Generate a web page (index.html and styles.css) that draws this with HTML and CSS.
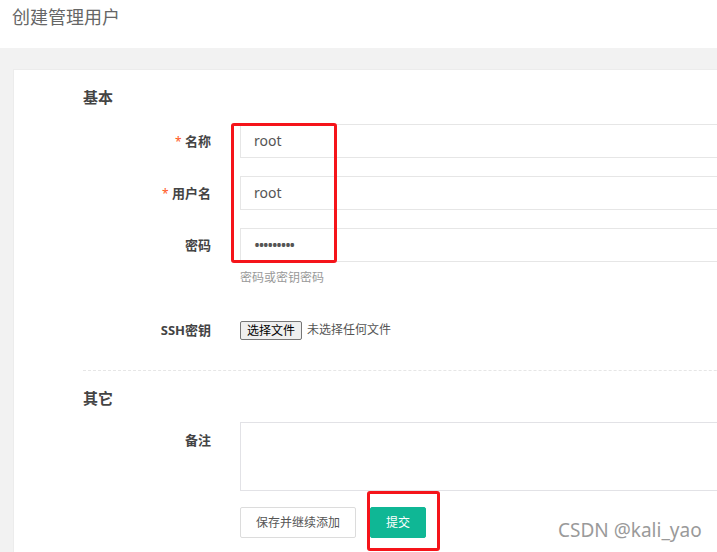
FILE: index.html
```html
<!DOCTYPE html>
<html lang="zh-CN">
<head>
<meta charset="utf-8">
<title>创建管理用户</title>
<link rel="stylesheet" href="styles.css">
</head>
<body>
<div class="page">
  <header class="head">创建管理用户</header>
  <main class="main">
    <section class="card">
      <h2 class="sec-title">基本</h2>
      <div class="row">
        <label class="label"><span class="req">*</span> 名称</label>
        <div class="field"><div class="input">root</div></div>
      </div>
      <div class="row">
        <label class="label"><span class="req">*</span> 用户名</label>
        <div class="field"><div class="input">root</div></div>
      </div>
      <div class="row">
        <label class="label">密码</label>
        <div class="field"><div class="input pwd">•••••••••</div></div>
      </div>
      <div class="help">密码或密钥密码</div>
      <div class="row file-row">
        <label class="label">SSH密钥</label>
        <div class="field file-field">
          <span class="file-btn">选择文件</span>
          <span class="file-text">未选择任何文件</span>
        </div>
      </div>
      <hr class="divider">
      <h2 class="sec-title sec-two">其它</h2>
      <div class="row area-row">
        <label class="label">备注</label>
        <div class="field"><div class="textarea"></div></div>
      </div>
      <div class="actions">
        <button class="btn btn-plain">保存并继续添加</button>
        <button class="btn btn-primary">提交</button>
      </div>
    </section>
  </main>
  <div class="mark mark-a"></div>
  <div class="mark mark-b"></div>
  <div class="watermark">CSDN @kali_yao</div>
</div>
</body>
</html>
```
FILE: styles.css
```css
html, body {
  margin: 0;
  padding: 0;
  overflow: hidden;
  width: 717px;
  height: 552px;
}
body {
  font-family: "Noto Sans", "Noto Sans CJK SC", sans-serif;
  color: #333;
  background: #f2f2f2;
}
.page {
  position: relative;
  width: 717px;
  height: 552px;
  overflow: hidden;
}
.head {
  height: 48px;
  background: #fff;
  font-size: 18px;
  line-height: 34px;
  padding-left: 12px;
  color: #666;
  box-sizing: border-box;
}
.main {
  padding: 21px 0 0 13px;
}
.card {
  width: 900px;
  height: 600px;
  background: #fff;
  border: 1px solid #ececec;
  padding-top: 17px;
  box-sizing: border-box;
}
.sec-title {
  margin: 0 0 0 69px;
  font-size: 15px;
  font-weight: bold;
  line-height: 20px;
  height: 20px;
  color: #444;
}
.row {
  display: flex;
  margin-top: 17px;
}
.row + .row {
  margin-top: 18px;
}
.label {
  width: 197px;
  height: 34px;
  flex: none;
  text-align: right;
  font-size: 13px;
  font-weight: bold;
  line-height: 34px;
  color: #444;
}
.req {
  color: #ff5722;
  font-weight: normal;
  font-size: 12px;
  line-height: 1;
}
.field {
  margin-left: 29px;
  flex: 1;
}
.input {
  height: 34px;
  box-sizing: border-box;
  border: 1px solid #e6e6e6;
  padding-left: 13px;
  font-size: 14px;
  line-height: 32px;
  color: #555;
}
.pwd {
  letter-spacing: -1.6px;
  font-size: 16px;
  color: #555;
}
.help {
  margin: 8px 0 0 226px;
  font-size: 12px;
  line-height: 16px;
  color: #999;
}
.row.file-row {
  margin-top: 34px;
}
.file-row .label {
  line-height: 20px;
  height: 20px;
}
.file-field {
  display: flex;
  align-items: center;
  gap: 5px;
  font-size: 12px;
}
.file-btn {
  height: 19px;
  box-sizing: border-box;
  padding: 0 6px;
  border: 1px solid #767676;
  border-radius: 2px;
  background: #efefef;
  line-height: 17px;
  color: #000;
}
.file-text {
  color: #555;
  line-height: 20px;
}
.divider {
  margin: 30px 0 0 69px;
  border: 0;
  border-top: 1px dashed #e6e6e6;
  height: 0;
}
.sec-title.sec-two {
  margin-top: 17px;
}
.row.area-row {
  margin-top: 14px;
}
.area-row .label {
  line-height: 36px;
  height: 36px;
}
.textarea {
  height: 69px;
  box-sizing: border-box;
  border: 1px solid #e2e2e6;
}
.actions {
  display: flex;
  gap: 14px;
  margin: 16px 0 0 226px;
}
.btn {
  height: 31px;
  box-sizing: border-box;
  font-family: "Noto Sans", "Noto Sans CJK SC", sans-serif;
  font-size: 12px;
  border-radius: 2px;
  padding: 0;
  line-height: 29px;
}
.btn-plain {
  width: 116px;
  background: #fff;
  border: 1px solid #dcdcdc;
  color: #555;
}
.btn-primary {
  width: 56px;
  background: #0fb795;
  border: 1px solid #0fb795;
  color: #fff;
}
.mark {
  position: absolute;
  border: 3px solid #f5141a;
  border-radius: 3px;
  box-sizing: border-box;
}
.mark-a {
  left: 231px;
  top: 123px;
  width: 106px;
  height: 140px;
}
.mark-b {
  left: 367px;
  top: 491px;
  width: 73px;
  height: 60px;
}
.watermark {
  position: absolute;
  left: 558px;
  top: 517px;
  font-family: "Noto Sans", sans-serif;
  font-size: 19px;
  line-height: 26px;
  color: #9a9a9a;
  white-space: nowrap;
}
```
